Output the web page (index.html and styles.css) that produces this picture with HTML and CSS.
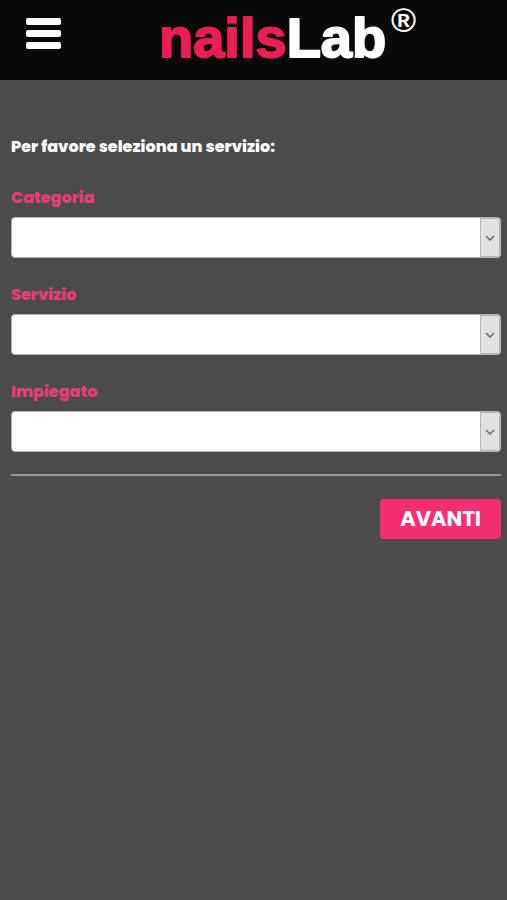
FILE: index.html
```html
<!DOCTYPE html>
<html lang="it">
<head>
  <meta charset="UTF-8" />
  <meta name="viewport" content="width=device-width, initial-scale=1.0"/>
  <title>nailsLab</title>
  <link rel="stylesheet" href="styles.css">
</head>
<body>
  <header class="header">
    <button type="button" class="menu" aria-label="Menu">
      <span class="bar"></span>
      <span class="bar"></span>
      <span class="bar"></span>
    </button>
    <a class="logo" href="#">
      <svg width="260" height="80" viewBox="0 0 260 80">
        <text class="logo-name" x="0" y="57"><tspan class="nails">nails</tspan><tspan class="lab">Lab</tspan></text>
        <text class="logo-mark" x="232" y="32">®</text>
      </svg>
    </a>
  </header>

  <form class="booking">
    <p class="intro">Per favore seleziona un servizio:</p>

    <div class="fields">
      <div class="field">
        <label for="categoria">Categoria</label>
        <div class="select">
          <select id="categoria"><option value=""></option></select>
          <span class="arrow"><svg width="10" height="6" viewBox="0 0 10 6"><path d="M1 1l4 4 4-4"/></svg></span>
        </div>
      </div>

      <div class="field">
        <label for="servizio">Servizio</label>
        <div class="select">
          <select id="servizio"><option value=""></option></select>
          <span class="arrow"><svg width="10" height="6" viewBox="0 0 10 6"><path d="M1 1l4 4 4-4"/></svg></span>
        </div>
      </div>

      <div class="field">
        <label for="impiegato">Impiegato</label>
        <div class="select">
          <select id="impiegato"><option value=""></option></select>
          <span class="arrow"><svg width="10" height="6" viewBox="0 0 10 6"><path d="M1 1l4 4 4-4"/></svg></span>
        </div>
      </div>
    </div>

    <div class="actions">
      <button type="submit" class="next">AVANTI</button>
    </div>
  </form>
</body>
</html>
```
FILE: styles.css
```css
* {
  box-sizing: border-box;
}
body {
  margin: 0;
  min-height: 100vh;
  font-family: Poppins, Inter, sans-serif;
  font-size: 16px;
  font-weight: 700;
  line-height: 24px;
  background-color: #4b4b4b;
  color: #fff;
}
.header {
  display: flex;
  align-items: flex-start;
  gap: 98px;
  height: 80px;
  padding-left: 26px;
  background-color: #090909;
}
.menu {
  display: flex;
  flex-direction: column;
  gap: 5px;
  width: 35px;
  margin-top: 18px;
  padding: 0;
  border: none;
  background: none;
  cursor: pointer;
}
.bar {
  width: 100%;
  height: 7px;
  border-radius: 2px;
  background-color: #fff;
}
.logo svg {
  display: block;
}
.logo-name {
  font-family: "Liberation Sans", Arial, sans-serif;
  font-size: 56px;
  font-weight: 700;
  stroke-width: 2px;
  stroke-linejoin: round;
}
.nails {
  fill: #e91e55;
  stroke: #e91e55;
}
.lab {
  fill: #fff;
  stroke: #fff;
}
.logo-mark {
  font-family: "Liberation Sans", Arial, sans-serif;
  font-size: 34px;
  font-weight: 700;
  fill: #fff;
}
.booking {
  padding: 55px 6px 0 11px;
}
.intro {
  margin: 0 0 27px;
}
.fields {
  display: flex;
  flex-direction: column;
  gap: 25px;
  margin-bottom: 22px;
}
label {
  display: block;
  margin-bottom: 7px;
  color: #e63e78;
}
.intro,
label {
  font-weight: 800;
}
.select {
  position: relative;
}
select {
  display: block;
  width: 100%;
  height: 41px;
  padding: 0 30px 0 10px;
  border: 1px solid #b5b5b5;
  border-radius: 4px;
  background-color: #fff;
  font: inherit;
  appearance: none;
}
/* drop-down handle laid over the right end of the select */
.arrow {
  position: absolute;
  top: 1px;
  right: 1px;
  bottom: 1px;
  width: 20px;
  display: flex;
  align-items: center;
  justify-content: center;
  border: 1px solid #b5b5b5;
  border-radius: 0 3px 3px 0;
  background-color: #e1e1e1;
  pointer-events: none;
}
.arrow path {
  fill: none;
  stroke: #666;
  stroke-width: 1.5;
}
.actions {
  display: flex;
  justify-content: flex-end;
  padding-top: 23px;
  border-top: 2px solid #999;
}
.next {
  height: 40px;
  padding: 0 20px;
  border: none;
  border-radius: 4px;
  background-color: #f62f73;
  color: #fff;
  font: inherit;
  font-size: 21px;
  cursor: pointer;
}
```
